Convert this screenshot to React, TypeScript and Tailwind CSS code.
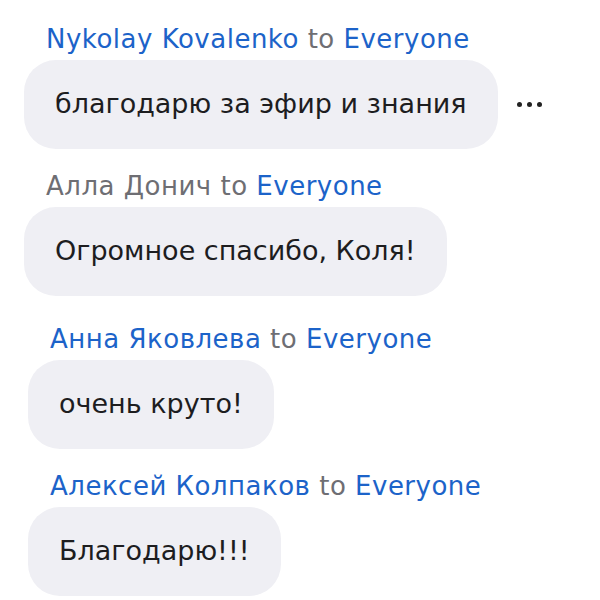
const messages = [
  { name: "Nykolay Kovalenko", nameBlue: true, text: "благодарю за эфир и знания", more: true, wide: false },
  { name: "Алла Донич", nameBlue: false, text: "Огромное спасибо, Коля!", more: false, wide: false },
  { name: "Анна Яковлева", nameBlue: true, text: "очень круто!", more: false, wide: true },
  { name: "Алексей Колпаков", nameBlue: true, text: "Благодарю!!!", more: false, wide: true },
];

export default function App() {
  return (
    <div
      className="w-[600px] h-[600px] bg-white overflow-hidden pt-[24px]"
      style={{ fontFamily: '"DejaVu Sans", "Liberation Sans", sans-serif' }}
    >
      {messages.map((m, i) => (
        <div
          key={i}
          className={`${m.wide ? "pl-[28px]" : "pl-[24px]"} ${i === 0 ? "" : i === 2 ? "mt-[28px]" : "mt-[22px]"}`}
        >
          <div className="pl-[22px] h-[30px] leading-[30px] text-[26px] tracking-[0.5px] text-[#6e6e73] whitespace-nowrap">
            <span className={m.nameBlue ? "text-[#1c63c9]" : "text-[#6e6e73]"}>{m.name}</span>
            <span> to </span>
            <span className="text-[#1c63c9]">Everyone</span>
          </div>
          <div className="mt-[6px] flex items-center">
            <div className="h-[89px] rounded-[32px] bg-[#efeff4] px-[31px] flex items-center text-[27px] text-[#1d1d1f] whitespace-nowrap">
              {m.text}
            </div>
            {m.more && (
              <div className="ml-[19px] flex gap-[5px] items-center">
                <span className="w-[5px] h-[5px] rounded-full bg-[#222]" />
                <span className="w-[5px] h-[5px] rounded-full bg-[#222]" />
                <span className="w-[5px] h-[5px] rounded-full bg-[#222]" />
              </div>
            )}
          </div>
        </div>
      ))}
    </div>
  );
}
